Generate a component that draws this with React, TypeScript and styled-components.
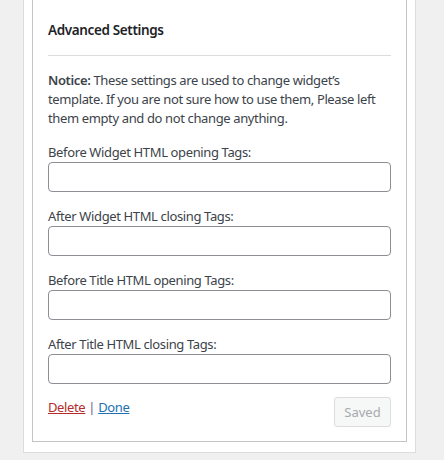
import React from "react";
import styled, { createGlobalStyle } from "styled-components";

const Global = createGlobalStyle`
  html, body {
    margin: 0;
    padding: 0;
    background: #f0f0f1;
    overflow: hidden;
  }
  body {
    font-family: "Segoe UI", "Noto Sans", sans-serif;
    font-size: 13px;
    letter-spacing: -0.37px;
    color: #3c434a;
  }
`;

const Outer = styled.div`
  box-sizing: border-box;
  width: 393px;
  margin: -10px 0 0 23px;
  background: #fff;
  border: 1px solid #dcdcde;
  padding: 0 8px 10px 8px;
`;

const Inner = styled.div`
  border: 1px solid #c3c4c7;
  border-top: 0;
  padding: 30px 15px 14px 15px;
  background: #fff;
`;

const Heading = styled.h4`
  margin: 0;
  font-size: 13.5px;
  font-weight: 600;
  line-height: 19px;
  color: #1d2327;
  padding-bottom: 15px;
  border-bottom: 1px solid #dcdcde;
`;

const Notice = styled.p`
  margin: 15px 0 0 0;
  line-height: 19px;
  b {
    font-weight: 600;
  }
`;

const Field = styled.div`
  display: flex;
  flex-direction: column;
  margin-top: 15px;
`;

const Label = styled.label`
  line-height: 19px;
`;

const Input = styled.input`
  box-sizing: border-box;
  width: 100%;
  height: 30px;
  margin: 0;
  border: 1px solid #8c8f94;
  border-radius: 4px;
  background: #fff;
  font: inherit;
`;

const Footer = styled.div`
  display: flex;
  justify-content: space-between;
  align-items: flex-start;
  margin-top: 13px;
`;

const Links = styled.div`
  line-height: 19px;
  padding-top: 1px;
`;

const Link = styled.a<{ $danger?: boolean }>`
  color: ${(p) => (p.$danger ? "#b32d2e" : "#2271b1")};
  text-decoration: underline;
  cursor: pointer;
`;

const Sep = styled.span`
  color: #7b5587;
`;

const SavedButton = styled.button`
  box-sizing: border-box;
  width: 57px;
  height: 30px;
  padding: 0;
  font: inherit;
  font-size: 13px;
  color: #a7aaad;
  background: #f6f7f7;
  border: 1px solid #dcdcde;
  border-radius: 3px;
`;

const fields = [
  "Before Widget HTML opening Tags:",
  "After Widget HTML closing Tags:",
  "Before Title HTML opening Tags:",
  "After Title HTML closing Tags:",
];

export default function App() {
  return (
    <>
      <Global />
      <Outer>
        <Inner>
          <Heading>Advanced Settings</Heading>
          <Notice>
            <b>Notice:</b> These settings are used to change widget’s template. If you are
            not sure how to use them, Please left them empty and do not change anything.
          </Notice>
          {fields.map((f) => (
            <Field key={f}>
              <Label>{f}</Label>
              <Input type="text" />
            </Field>
          ))}
          <Footer>
            <Links>
              <Link $danger>Delete</Link> <Sep>|</Sep> <Link>Done</Link>
            </Links>
            <SavedButton disabled>Saved</SavedButton>
          </Footer>
        </Inner>
      </Outer>
    </>
  );
}
